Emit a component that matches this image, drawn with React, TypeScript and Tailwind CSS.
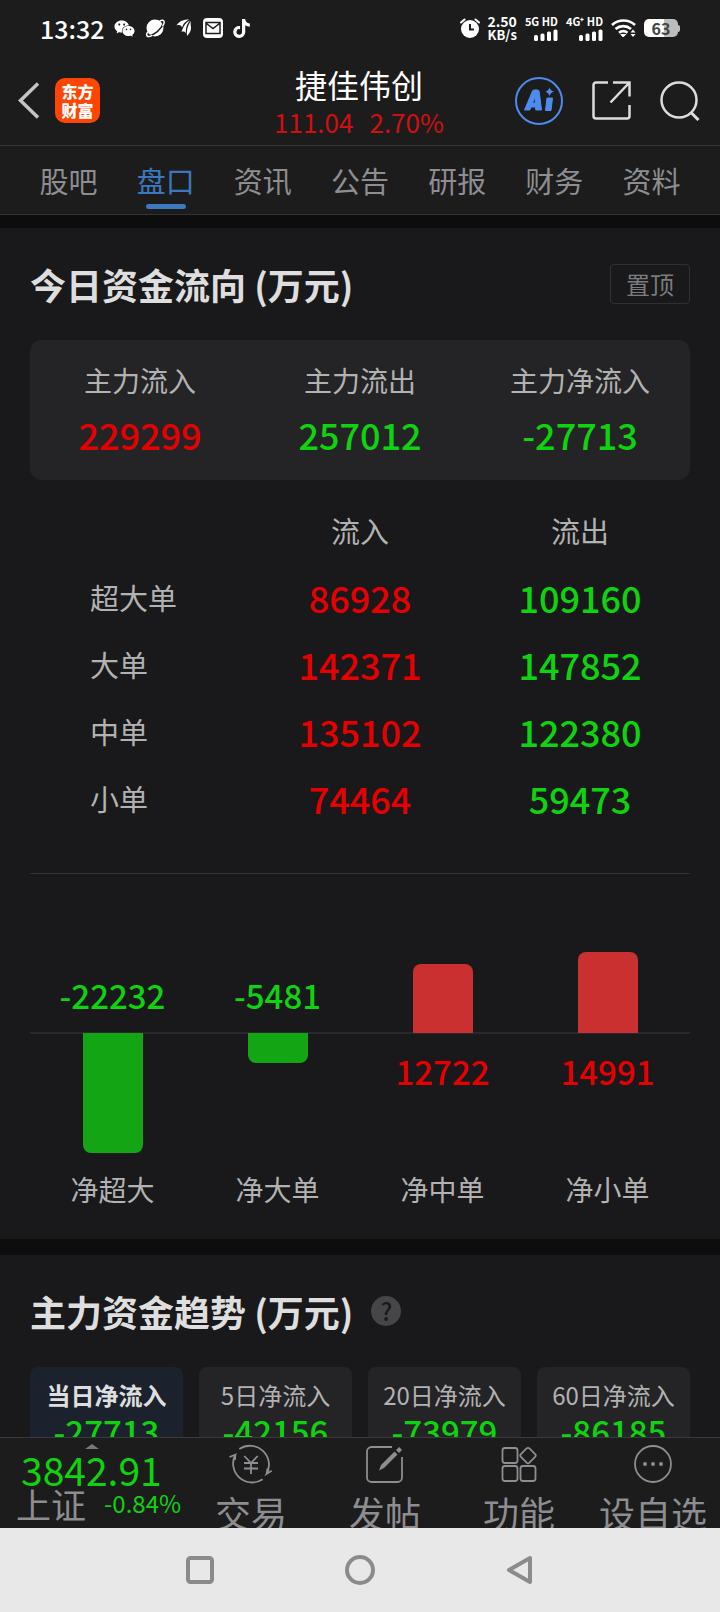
import type { ReactNode } from "react";
import { AiFillWechat } from "react-icons/ai";
import { FaTiktok } from "react-icons/fa";

const tabs = ["股吧", "盘口", "资讯", "公告", "研报", "财务", "资料"];

const summary = [
  { label: "主力流入", value: 229299, up: true },
  { label: "主力流出", value: 257012, up: false },
  { label: "主力净流入", value: -27713, up: false },
];

const orders = [
  { label: "超大单", inflow: 86928, outflow: 109160 },
  { label: "大单", inflow: 142371, outflow: 147852 },
  { label: "中单", inflow: 135102, outflow: 122380 },
  { label: "小单", inflow: 74464, outflow: 59473 },
];

const netFlows = [
  { label: "净超大", value: -22232 },
  { label: "净大单", value: -5481 },
  { label: "净中单", value: 12722 },
  { label: "净小单", value: 14991 },
];

const trends = [
  { label: "当日净流入", value: -27713 },
  { label: "5日净流入", value: -42156 },
  { label: "20日净流入", value: -73979 },
  { label: "60日净流入", value: -86185 },
];

const MAX_BAR = 120;
const maxNet = Math.max(...netFlows.map((n) => Math.abs(n.value)));
const barHeight = (value: number) => Math.round((Math.abs(value) / maxNet) * MAX_BAR);

function Signal({ label }: { label: string }) {
  return (
    <div className="flex flex-col items-end gap-[2px]">
      <span className="text-[11px] leading-3 font-bold whitespace-nowrap">{label}</span>
      <svg width="24" height="12" viewBox="0 0 24 12" fill="currentColor" aria-hidden="true">
        <rect x="0" y="6" width="4" height="6" rx="1.500" />
        <rect x="6.500" y="4.500" width="4" height="7.500" rx="1.500" />
        <rect x="13" y="2.500" width="4" height="9.500" rx="1.500" />
        <rect x="19.500" y="0.500" width="4" height="11.500" rx="1.500" />
      </svg>
    </div>
  );
}

function StatusBar() {
  return (
    <div className="flex h-14 items-center justify-between px-10 text-white">
      <div className="flex items-center gap-[9px]">
        <span className="text-[25px] leading-8 font-medium">13:32</span>
        <AiFillWechat size={23} />
        <svg width="20" height="20" viewBox="0 0 20 20" aria-hidden="true">
          <circle cx="10" cy="10" r="8.500" fill="currentColor" />
          <g transform="rotate(-42 10 10)" fill="none">
            <path d="M-1 11.500q11 5.500 22 0" stroke="#1c1c1c" strokeWidth="1.600" />
            <path d="M2 8q-4 1-3 3.500 1 1.500 4 2M18 8q4 1 3 3.500-1 1.500-4 2" stroke="currentColor" strokeWidth="1.500" />
          </g>
        </svg>
        <svg width="20" height="20" viewBox="0 0 20 20" fill="currentColor" aria-hidden="true">
          <path d="M15 1.500C10 1.500 5 3 2.500 7.500c3-1 4.500-.5 5.500 2C9 6 11.500 3 15 1.500Z" />
          <path d="M16 2.500C12 4 9.500 8 7.500 14c2-1 3.500-.5 4.500 1.500C11.500 11 12.500 6 16 2.500Z" />
          <path d="M17 3c-3 4-4.500 8-4 15 3-3 4-5.500 4-8s-1-4 0-7Z" />
        </svg>
        <svg width="20" height="20" viewBox="0 0 20 20" fill="none" aria-hidden="true">
          <rect width="20" height="20" rx="4" fill="currentColor" />
          <path d="M3 4.500h14v11H3zM3.500 5.500 10 10.500l6.500-5" stroke="#1c1c1c" strokeWidth="1.500" />
        </svg>
        <FaTiktok size={19} />
      </div>
      <div className="flex items-center gap-2">
        <svg width="20" height="20" viewBox="0 0 20 20" aria-hidden="true">
          <circle cx="10" cy="11" r="9" fill="currentColor" />
          <path d="M1 4.500 4.500 1.500M19 4.500 15.500 1.500" stroke="currentColor" strokeWidth="2" strokeLinecap="round" />
          <path d="M10 6v5.500h4" fill="none" stroke="#1c1c1c" strokeWidth="2" />
        </svg>
        <div className="flex flex-col items-center text-[14px] leading-[13px] font-bold">
          <span>2.50</span>
          <span className="text-[13px]">KB/s</span>
        </div>
        <Signal label="5G HD" />
        <Signal label="4G⁺ HD" />
        <svg width="25" height="20" viewBox="0 0 25 20" fill="none" stroke="currentColor" aria-hidden="true">
          <path d="M1 7a17 17 0 0 1 23 0M4.500 11a12 12 0 0 1 15.500 0M8 14.800a7 7 0 0 1 8.500 0" strokeWidth="2.600" />
          <path d="M9.800 16.500 12.200 19 14.700 16.500Z" fill="currentColor" strokeWidth="1" />
          <path d="M19.500 14.500h5L22 11.500ZM19.500 16h5L22 19Z" fill="currentColor" stroke="none" />
        </svg>
        <div className="flex items-center">
          <span className="flex h-[18px] w-[34px] items-center justify-center rounded-[5px] bg-linear-to-r from-white from-60% to-[#bdbdbd] to-60% text-[16px] leading-4 font-bold text-[#444]">
            63
          </span>
          <span className="h-[7px] w-[2px] rounded-r-sm bg-[#bdbdbd]" />
        </div>
      </div>
    </div>
  );
}

function Header() {
  return (
    <header className="grid h-[90px] grid-cols-[1fr_auto_1fr] items-center border-b border-[#343434] pr-5 pl-[18px]">
      <div className="flex items-center gap-4">
        <button aria-label="返回" className="text-[#c4c4c4]">
          <svg width="21" height="37" viewBox="0 0 21 37" fill="none" stroke="currentColor" strokeWidth="3.500">
            <path d="M20 1.500 2.500 18.500 20 35.500" />
          </svg>
        </button>
        <a
          href="#home"
          className="flex size-[45px] flex-col items-center justify-center rounded-[10px] bg-[#fe4502] text-[16px] leading-[19px] font-black text-white"
        >
          <span>东方</span>
          <span>财富</span>
        </a>
      </div>
      <div className="flex flex-col items-center pt-[2px]">
        <h1 className="text-[32px] leading-10 text-white">捷佳伟创</h1>
        <p className="flex gap-4 text-[26px] leading-9 text-[#d01010]">
          <span>111.04</span>
          <span>2.70%</span>
        </p>
      </div>
      <div className="flex items-center justify-end gap-[29px] text-[#dcdcdc]">
        <button aria-label="AI 助手" className="text-[#4d8bee]">
          <svg width="48" height="48" viewBox="0 0 48 48" aria-hidden="true">
            <circle cx="24" cy="24" r="23" fill="none" stroke="currentColor" strokeWidth="2" />
            <path
              d="M9.500 33 17.500 14Q18 13 19 13H22.500Q24 13 24.200 14.500L26.500 33H20.800L20.500 30H16L14.800 33ZM17.500 26H20.300L19.800 20Z"
              fill="currentColor"
              fillRule="evenodd"
              stroke="currentColor"
              strokeLinejoin="round"
            />
            <path d="M32 21H37.500L36 33.500H30.500Z" fill="currentColor" stroke="currentColor" strokeLinejoin="round" />
            <path d="M34.500 10.500q1 3.500 4.500 4-3.500 1-4.500 4.500-1-3.500-4-4.500 3-.5 4-4Z" fill="currentColor" />
          </svg>
        </button>
        <button aria-label="分享">
          <svg width="39" height="39" viewBox="0 0 39 39" fill="none" stroke="currentColor" strokeWidth="2.500" aria-hidden="true">
            <path d="M16 1.500H4a2.500 2.500 0 0 0-2.500 2.500v31A2.500 2.500 0 0 0 4 37.500h31a2.500 2.500 0 0 0 2.500-2.500V24M21 1.500h16.500V15.500M37 2 18.500 21.500" />
          </svg>
        </button>
        <button aria-label="搜索">
          <svg width="40" height="40" viewBox="0 0 40 40" fill="none" stroke="currentColor" strokeWidth="2.500" aria-hidden="true">
            <circle cx="19" cy="19" r="17.500" />
            <path d="M31 31.500 38.500 39" strokeWidth="3" />
          </svg>
        </button>
      </div>
    </header>
  );
}

function Tabs() {
  return (
    <nav className="flex h-[69px] border-b border-[#343434] px-5">
      {tabs.map((tab) =>
        tab === "盘口" ? (
          <a key={tab} href="#quote" className="flex flex-1 flex-col items-center pt-3 text-[29px] leading-[44px] text-[#3b78bd]">
            {tab}
            <span className="mt-[2px] h-[5px] w-10 rounded-full bg-[#3b78bd]" />
          </a>
        ) : (
          <a key={tab} href="#tab" className="flex flex-1 flex-col items-center pt-3 text-[29px] leading-[44px] text-[#8d8d92]">
            {tab}
          </a>
        )
      )}
    </nav>
  );
}

function FundFlow() {
  return (
    <section className="bg-[#19191b] px-[30px] pb-8">
      <div className="flex h-28 items-center justify-between">
        <h2 className="text-[36px] leading-[48px] font-bold text-[#dedede]">今日资金流向 (万元)</h2>
        <button className="h-10 w-20 rounded-[4px] border border-[#303032] text-[24px] leading-8 text-[#7c7c7e]">
          置顶
        </button>
      </div>

      <dl className="grid h-[140px] grid-cols-3 rounded-xl bg-[#242426] pt-5 text-center">
        {summary.map((s) => (
          <div key={s.label}>
            <dt className="text-[28px] leading-10 text-[#b2b2b2]">{s.label}</dt>
            <dd className={`mt-2 text-[36px] leading-[52px] font-medium ${s.up ? "text-[#e60000]" : "text-[#0fd30f]"}`}>
              {s.value}
            </dd>
          </div>
        ))}
      </dl>

      <table className="mt-4 w-full table-fixed text-center">
        <thead>
          <tr className="h-[67px] text-[29px] leading-10 text-[#b2b2b2]">
            <th aria-label="类型" />
            <th className="font-normal">流入</th>
            <th className="font-normal">流出</th>
          </tr>
        </thead>
        <tbody>
          {orders.map((o) => (
            <tr key={o.label} className="h-[67px] text-[36px] leading-[52px] font-medium">
              <th scope="row" className="pl-[60px] text-left text-[29px] font-normal text-[#b2b2b2]">
                {o.label}
              </th>
              <td className="text-[#e60000]">{o.inflow}</td>
              <td className="text-[#0fd30f]">{o.outflow}</td>
            </tr>
          ))}
        </tbody>
      </table>

      <div className="mt-[42px] grid grid-cols-4 border-t border-[#303032] text-center">
        {netFlows.map((n) => (
          <div key={n.label}>
            <div className="flex h-[159px] flex-col items-center justify-end border-b border-[#29292b]">
              {n.value < 0 ? (
                <span className="mb-[14px] text-[33px] leading-[46px] font-medium text-[#0fd30f]">{n.value}</span>
              ) : (
                <span className="-mb-px w-[60px] rounded-t-lg bg-[#cb3031]" style={{ height: barHeight(n.value) }} />
              )}
            </div>
            <div className="flex h-[138px] flex-col items-center border-t border-[#29292b]">
              {n.value < 0 ? (
                <span className="-mt-px w-[60px] rounded-b-lg bg-[#13a513]" style={{ height: barHeight(n.value) }} />
              ) : (
                <span className="mt-[14px] text-[33px] leading-[46px] font-medium text-[#e60000]">{n.value}</span>
              )}
            </div>
            <p className="text-[28px] leading-9 text-[#b2b2b2]">{n.label}</p>
          </div>
        ))}
      </div>
    </section>
  );
}

function FundTrend() {
  return (
    <section className="bg-[#19191b] px-[30px] pb-8">
      <div className="flex h-28 items-center gap-[18px]">
        <h2 className="text-[36px] leading-[48px] font-bold text-[#dedede]">主力资金趋势 (万元)</h2>
        <button
          aria-label="说明"
          className="flex size-[30px] items-center justify-center rounded-full bg-[#464649] text-[24px] leading-6 font-medium text-[#19191b]"
        >
          ?
        </button>
      </div>
      <div className="grid grid-cols-4 gap-4">
        {trends.map((t, i) => (
          <button
            key={t.label}
            className={`flex flex-col items-center rounded-lg pt-3 pb-4 ${
              i === 0 ? "bg-[#1b222d] font-bold text-[#dedede]" : "bg-[#242426] text-[#b2b2b2]"
            }`}
          >
            <span className="text-[24px] leading-8 whitespace-nowrap">{t.label}</span>
            <span className="text-[33px] leading-10 font-medium text-[#0fd30f]">{t.value}</span>
          </button>
        ))}
      </div>
    </section>
  );
}

function Action({ label, children }: { label: string; children: ReactNode }) {
  return (
    <button className="flex flex-1 flex-col items-center pt-[6px] text-[#8d8d92]">
      <svg width="44" height="40" viewBox="0 0 44 40" fill="none" stroke="currentColor" strokeWidth="1.800" className="shrink-0" aria-hidden="true">
        {children}
      </svg>
      <span className="mt-[2px] text-[36px] leading-[52px] whitespace-nowrap">{label}</span>
    </button>
  );
}

function BottomBar() {
  return (
    <footer className="flex h-[91px] shrink-0 overflow-hidden border-t border-[#3a3a3a] bg-[#1c1c1c]">
      <a href="#index" className="flex w-[184px] flex-col pt-[6px] pl-4">
        <svg width="14" height="5" viewBox="0 0 14 5" fill="#77777a" className="ml-[69px] shrink-0" aria-hidden="true">
          <path d="M0 5 7 0l7 5Z" />
        </svg>
        <span className="ml-[5px] text-[39px] leading-10 text-[#0fd30f]">3842.91</span>
        <span className="flex items-start gap-[18px] whitespace-nowrap">
          <span className="text-[35px] leading-[30px] text-[#8d8d92]">上证</span>
          <span className="text-[24px] leading-7 text-[#0fd30f]">-0.84%</span>
        </span>
      </a>
      <Action label="交易">
        <path d="M10.300 5A19 19 0 0 1 37.700 29.700L42.700 26.700M37.700 29.700 38.500 24.500M33.700 35.300A19 19 0 0 1 6.300 10.700L.5 13M6.300 10.700 6 16" />
        <path d="M15.300 12 22 19l6.700-7M15 19h14M15 24.500h14M22 19v11" />
      </Action>
      <Action label="发帖">
        <path d="M29 3H8.500A4.500 4.500 0 0 0 4 7.500v26A4.500 4.500 0 0 0 8.500 38h26a4.500 4.500 0 0 0 4.500-4.500V13" />
        <path d="m16 26.500 2-5.500L31.500 7.500l3 3L21 24ZM33 6l3.200-3 2.800 3-3 3Z" fill="currentColor" stroke="none" />
      </Action>
      <Action label="功能">
        <rect x="5.500" y="4" width="15" height="15" rx="2.500" />
        <rect x="5.500" y="22" width="15" height="15" rx="2.500" />
        <rect x="23.500" y="22" width="15" height="15" rx="2.500" />
        <rect x="25" y="5.500" width="12" height="12" rx="2" transform="rotate(45 31 11.500)" />
      </Action>
      <Action label="设自选">
        <circle cx="22" cy="20" r="18" />
        <g fill="currentColor" stroke="none">
          <circle cx="14" cy="20" r="2" />
          <circle cx="22" cy="20" r="2" />
          <circle cx="30" cy="20" r="2" />
        </g>
      </Action>
    </footer>
  );
}

function SystemNav() {
  return (
    <div className="flex h-[84px] shrink-0 items-center justify-center gap-[130px] bg-[#e8e8e8] text-[#8b8b8b]">
      <button aria-label="最近任务">
        <svg width="30" height="30" viewBox="0 0 30 30" fill="none" stroke="currentColor" strokeWidth="4">
          <rect x="3" y="3" width="24" height="24" rx="2.500" />
        </svg>
      </button>
      <button aria-label="主屏幕">
        <svg width="30" height="30" viewBox="0 0 30 30" fill="none" stroke="currentColor" strokeWidth="4">
          <circle cx="15" cy="15" r="13" />
        </svg>
      </button>
      <button aria-label="返回上一级">
        <svg width="30" height="30" viewBox="0 0 30 30" fill="none" stroke="currentColor" strokeWidth="4" strokeLinejoin="round">
          <path d="M4 15 25 3v24Z" />
        </svg>
      </button>
    </div>
  );
}

export default function App() {
  return (
    <div className="flex h-screen flex-col bg-[#0d0d0d] font-['Noto_Sans_CJK_SC',sans-serif]">
      <div className="shrink-0 bg-[#1c1c1c]">
        <StatusBar />
        <Header />
        <Tabs />
      </div>
      <main className="flex min-h-0 flex-1 flex-col gap-4 overflow-y-auto pt-[13px] [scrollbar-width:none]">
        <FundFlow />
        <FundTrend />
      </main>
      <BottomBar />
      <SystemNav />
    </div>
  );
}
